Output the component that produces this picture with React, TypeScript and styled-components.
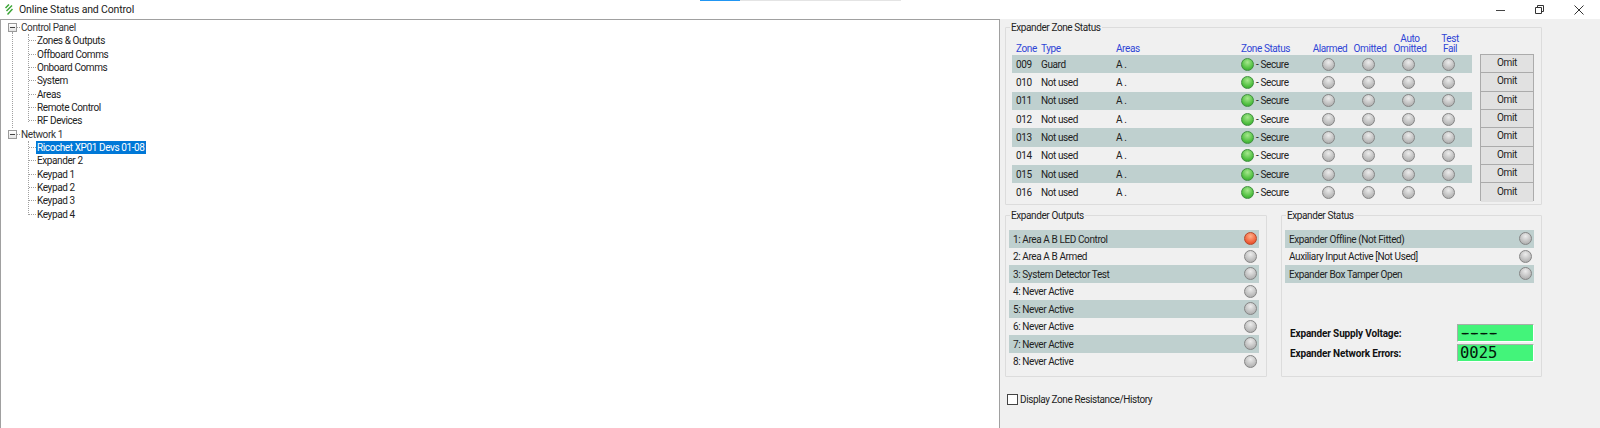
import React from "react";
import styled, { createGlobalStyle } from "styled-components";

const Global = createGlobalStyle`
  html, body { margin: 0; padding: 0; background: #fff; }
  body { font-family: Roboto, "Liberation Sans", Arial, sans-serif; font-size: 10px; letter-spacing: -0.4px; color: #222; overflow: hidden; }
`;

const Page = styled.div`
  position: relative;
  width: 1600px;
  height: 428px;
  display: flex;
  flex-direction: column;
  overflow: hidden;
`;
const Progress = styled.div`
  position: absolute;
  left: 700px;
  top: 0;
  width: 201px;
  height: 1px;
  background: linear-gradient(to right, #2196f3 40px, #e4e4e4 40px);
`;
const TitleBar = styled.header`
  height: 19px;
  flex: none;
  display: flex;
  align-items: center;
  padding-left: 5px;
  background: #fff;
`;
const TitleText = styled.span`
  margin-left: 6px;
  font-size: 10.5px;
  letter-spacing: -0.15px;
  color: #1a1a1a;
`;
const WindowButtons = styled.div`
  margin-left: auto;
  display: flex;
  align-items: center;
  height: 19px;
  padding-right: 16px;
  gap: 29px;
`;
const Main = styled.main`
  flex: 1;
  display: flex;
  min-height: 0;
`;
const TreePane = styled.nav`
  width: 1000px;
  box-sizing: border-box;
  border: 1px solid #a0a0a0;
  border-bottom: none;
  background: #fff;
  padding-top: 1px;
`;
const TreeRoot = styled.div`
  position: relative;
  &::before {
    content: "";
    position: absolute;
    left: 11px;
    top: 11px;
    height: 96px;
    border-left: 1px dotted #a0a0a0;
  }
`;
const RootRow = styled.div`
  position: relative;
  height: 13.33px;
  line-height: 13.33px;
  padding-left: 20px;
  color: #333;
  &::after {
    content: "";
    position: absolute;
    left: 16px;
    top: 6px;
    width: 3px;
    border-top: 1px dotted #a0a0a0;
  }
`;
const Toggle = styled.span`
  position: absolute;
  left: 7px;
  top: 2px;
  width: 7px;
  height: 7px;
  border: 1px solid #9a9a9a;
  background: linear-gradient(#fff, #e4e4e4);
  &::before {
    content: "";
    position: absolute;
    left: 1px;
    top: 3px;
    width: 5px;
    height: 1px;
    background: #444;
  }
`;
const ChildGroup = styled.div`
  position: relative;
  &::before {
    content: "";
    position: absolute;
    left: 27px;
    top: 0;
    bottom: 6px;
    border-left: 1px dotted #a0a0a0;
  }
`;
const ChildRow = styled.div`
  position: relative;
  height: 13.33px;
  line-height: 13.33px;
  padding-left: 35px;
  color: #222;
  &::before {
    content: "";
    position: absolute;
    left: 28px;
    top: 6px;
    width: 7px;
    border-top: 1px dotted #a0a0a0;
  }
`;
const ChildLabel = styled.span<{ $selected?: boolean }>`
  display: inline-block;
  height: 13px;
  padding: 0 1px;
  background: ${(p) => (p.$selected ? "#0078d7" : "transparent")};
  color: ${(p) => (p.$selected ? "#fff" : "inherit")};
`;

const RightPane = styled.section`
  flex: 1;
  background: #f0f0f0;
  padding: 8px 0 0 5px;
  display: flex;
  flex-direction: column;
`;
const GroupBox = styled.div<{ $w: number; $h: number }>`
  position: relative;
  box-sizing: border-box;
  width: ${(p) => p.$w}px;
  height: ${(p) => p.$h}px;
  border: 1px solid #dcdcdc;
  border-radius: 1px;
`;
const Legend = styled.span`
  position: absolute;
  left: 4px;
  top: -6px;
  line-height: 11px;
  padding: 0 1px;
  background: #f0f0f0;
  color: #222;
`;
const ZoneBody = styled.div`
  display: flex;
  gap: 8px;
  padding: 0 8px 0 6px;
`;
const ZoneTable = styled.div`
  width: 460px;
  flex: none;
`;
const ZoneHead = styled.div`
  display: grid;
  grid-template-columns: 25px 75px 125px 69px 40px 40px 40px 40px;
  height: 26px;
  padding: 0 0 1px 4px;
  align-items: end;
  color: #2f45d6;
  line-height: 10px;
`;
const HeadCenter = styled.span`
  text-align: center;
`;
const ZoneRow = styled.div<{ $shade: boolean }>`
  display: grid;
  grid-template-columns: 25px 75px 125px 67px 40px 40px 40px 40px;
  height: 18.33px;
  padding-left: 4px;
  align-items: center;
  background: ${(p) => (p.$shade ? "#bfd0cf" : "transparent")};
`;
const StatusCell = styled.span`
  display: flex;
  align-items: center;
  gap: 2px;
`;
const LedCell = styled.span`
  display: flex;
  justify-content: center;
`;
const Led = styled.span<{ $tone?: "grey" | "green" | "red" }>`
  display: block;
  flex: none;
  box-sizing: border-box;
  width: 13px;
  height: 13px;
  border-radius: 50%;
  border: 1.5px solid ${(p) => (p.$tone === "green" ? "#3f8f3f" : p.$tone === "red" ? "#b5482a" : "#858585")};
  background: ${(p) =>
    p.$tone === "green"
      ? "radial-gradient(circle at 50% 30%, #a6e88e, #4fbf3f 65%, #2f9a30)"
      : p.$tone === "red"
      ? "radial-gradient(circle at 50% 30%, #ffb08a, #f0603a 65%, #d8401f)"
      : "radial-gradient(circle at 50% 30%, #ececec, #bcbcbc 65%, #a4a4a4)"};
`;
const OmitColumn = styled.div`
  margin-top: 26px;
  width: 54px;
  flex: none;
  border: 1px solid #ababab;
  box-sizing: border-box;
  height: 147px;
`;
const OmitButton = styled.button`
  display: block;
  width: 100%;
  height: 18.33px;
  box-sizing: border-box;
  padding: 0 0 2px;
  border: 0;
  border-bottom: 1px solid #ababab;
  background: #e1e1e1;
  font: inherit;
  letter-spacing: inherit;
  color: #222;
  &:last-child { border-bottom: 0; }
`;

const LowerRow = styled.div`
  display: flex;
  gap: 14px;
  margin-top: 10px;
`;
const ListBody = styled.div`
  padding: 14px 7px 0 3px;
`;
const ListRow = styled.div<{ $shade: boolean }>`
  display: flex;
  align-items: center;
  justify-content: space-between;
  height: 17.5px;
  padding: 0 2px 0 4px;
  background: ${(p) => (p.$shade ? "#bfd0cf" : "transparent")};
`;
const ListLabel = styled.span`
  padding-top: 1px;
`;
const Metrics = styled.div`
  margin-top: 41.5px;
  display: flex;
  flex-direction: column;
  gap: 2px;
`;
const MetricRow = styled.div`
  display: flex;
  align-items: center;
  justify-content: space-between;
  padding-left: 5px;
`;
const MetricLabel = styled.span`
  font-weight: 700;
  letter-spacing: -0.15px;
  color: #111;
`;
const Lcd = styled.span<{ $dashes?: boolean }>`
  box-sizing: border-box;
  width: 77px;
  height: 18px;
  padding: 1px 0 0 2px;
  background: #43f47a;
  border-top: 1px solid #a6b0a8;
  border-left: 1px solid #a6b0a8;
  border-right: 1px solid #fff;
  border-bottom: 1px solid #fff;
  font-family: "DejaVu Sans Mono", monospace;
  font-size: 15.5px;
  letter-spacing: 0;
  line-height: 15px;
  color: #02180a;
  ${(p) => (p.$dashes ? "text-shadow: 2px 0 0 #02180a, -1px 0 0 #02180a;" : "")}
`;
const CheckRow = styled.label`
  display: flex;
  align-items: center;
  gap: 2px;
  margin: 17px 0 0 2px;
`;
const CheckBox = styled.span`
  display: block;
  box-sizing: border-box;
  width: 11px;
  height: 11px;
  border: 1px solid #444;
  background: #fff;
`;

const zones = ["009", "010", "011", "012", "013", "014", "015", "016"];
const outputs = [
  "1: Area A B LED Control",
  "2: Area A B Armed",
  "3: System Detector Test",
  "4: Never Active",
  "5: Never Active",
  "6: Never Active",
  "7: Never Active",
  "8: Never Active",
];
const statuses = ["Expander Offline (Not Fitted)", "Auxiliary Input Active [Not Used]", "Expander Box Tamper Open"];
const panelItems = ["Zones & Outputs", "Offboard Comms", "Onboard Comms", "System", "Areas", "Remote Control", "RF Devices"];
const netItems = ["Ricochet XP01 Devs 01-08", "Expander 2", "Keypad 1", "Keypad 2", "Keypad 3", "Keypad 4"];

const Logo = () => (
  <svg width="8" height="11" viewBox="0 0 8 11" fill="none" stroke="#3aa535" strokeWidth="1.5">
    <path d="M4 0.5 L0.5 4" />
    <path d="M7 1.5 L1.5 7" />
    <path d="M7.5 5 L2.5 10.5" />
  </svg>
);

export default function App() {
  return (
    <Page>
      <Global />
      <Progress />
      <TitleBar>
        <Logo />
        <TitleText>Online Status and Control</TitleText>
        <WindowButtons>
          <svg width="10" height="10" viewBox="0 0 10 10" stroke="#444" fill="none">
            <path d="M0 5.5H9" />
          </svg>
          <svg width="10" height="10" viewBox="0 0 10 10" stroke="#333" fill="none">
            <path d="M0.5 2.5H6.5V8.5H0.5Z" />
            <path d="M2.5 2.5V0.5H8.5V6.5H6.5" />
          </svg>
          <svg width="10" height="10" viewBox="0 0 10 10" stroke="#333" fill="none">
            <path d="M0.5 0.5L9.5 9.5M9.5 0.5L0.5 9.5" />
          </svg>
        </WindowButtons>
      </TitleBar>
      <Main>
        <TreePane>
          <TreeRoot>
            <RootRow>
              <Toggle />
              Control Panel
            </RootRow>
            <ChildGroup>
              {panelItems.map((t) => (
                <ChildRow key={t}>
                  <ChildLabel>{t}</ChildLabel>
                </ChildRow>
              ))}
            </ChildGroup>
            <RootRow>
              <Toggle />
              Network 1
            </RootRow>
            <ChildGroup>
              {netItems.map((t, i) => (
                <ChildRow key={t}>
                  <ChildLabel $selected={i === 0}>{t}</ChildLabel>
                </ChildRow>
              ))}
            </ChildGroup>
          </TreeRoot>
        </TreePane>
        <RightPane>
          <GroupBox $w={537} $h={178}>
            <Legend>Expander Zone Status</Legend>
            <ZoneBody>
              <ZoneTable>
                <ZoneHead>
                  <span>Zone</span>
                  <span>Type</span>
                  <span>Areas</span>
                  <span>Zone Status</span>
                  <HeadCenter>Alarmed</HeadCenter>
                  <HeadCenter>Omitted</HeadCenter>
                  <HeadCenter>
                    Auto
                    <br />
                    Omitted
                  </HeadCenter>
                  <HeadCenter>
                    Test
                    <br />
                    Fail
                  </HeadCenter>
                </ZoneHead>
                {zones.map((z, i) => (
                  <ZoneRow key={z} $shade={i % 2 === 0}>
                    <span>{z}</span>
                    <span>{i === 0 ? "Guard" : "Not used"}</span>
                    <span>A .</span>
                    <StatusCell>
                      <Led $tone="green" />- Secure
                    </StatusCell>
                    <LedCell><Led /></LedCell>
                    <LedCell><Led /></LedCell>
                    <LedCell><Led /></LedCell>
                    <LedCell><Led /></LedCell>
                  </ZoneRow>
                ))}
              </ZoneTable>
              <OmitColumn>
                {zones.map((z) => (
                  <OmitButton key={z}>Omit</OmitButton>
                ))}
              </OmitColumn>
            </ZoneBody>
          </GroupBox>
          <LowerRow>
            <GroupBox $w={262} $h={162}>
              <Legend>Expander Outputs</Legend>
              <ListBody>
                {outputs.map((t, i) => (
                  <ListRow key={t} $shade={i % 2 === 0}>
                    <ListLabel>{t}</ListLabel>
                    <Led $tone={i === 0 ? "red" : "grey"} />
                  </ListRow>
                ))}
              </ListBody>
            </GroupBox>
            <GroupBox $w={261} $h={162}>
              <Legend>Expander Status</Legend>
              <ListBody>
                {statuses.map((t, i) => (
                  <ListRow key={t} $shade={i % 2 === 0}>
                    <ListLabel>{t}</ListLabel>
                    <Led />
                  </ListRow>
                ))}
                <Metrics>
                  <MetricRow>
                    <MetricLabel>Expander Supply Voltage:</MetricLabel>
                    <Lcd $dashes>----</Lcd>
                  </MetricRow>
                  <MetricRow>
                    <MetricLabel>Expander Network Errors:</MetricLabel>
                    <Lcd>0025</Lcd>
                  </MetricRow>
                </Metrics>
              </ListBody>
            </GroupBox>
          </LowerRow>
          <CheckRow>
            <CheckBox />
            Display Zone Resistance/History
          </CheckRow>
        </RightPane>
      </Main>
    </Page>
  );
}
